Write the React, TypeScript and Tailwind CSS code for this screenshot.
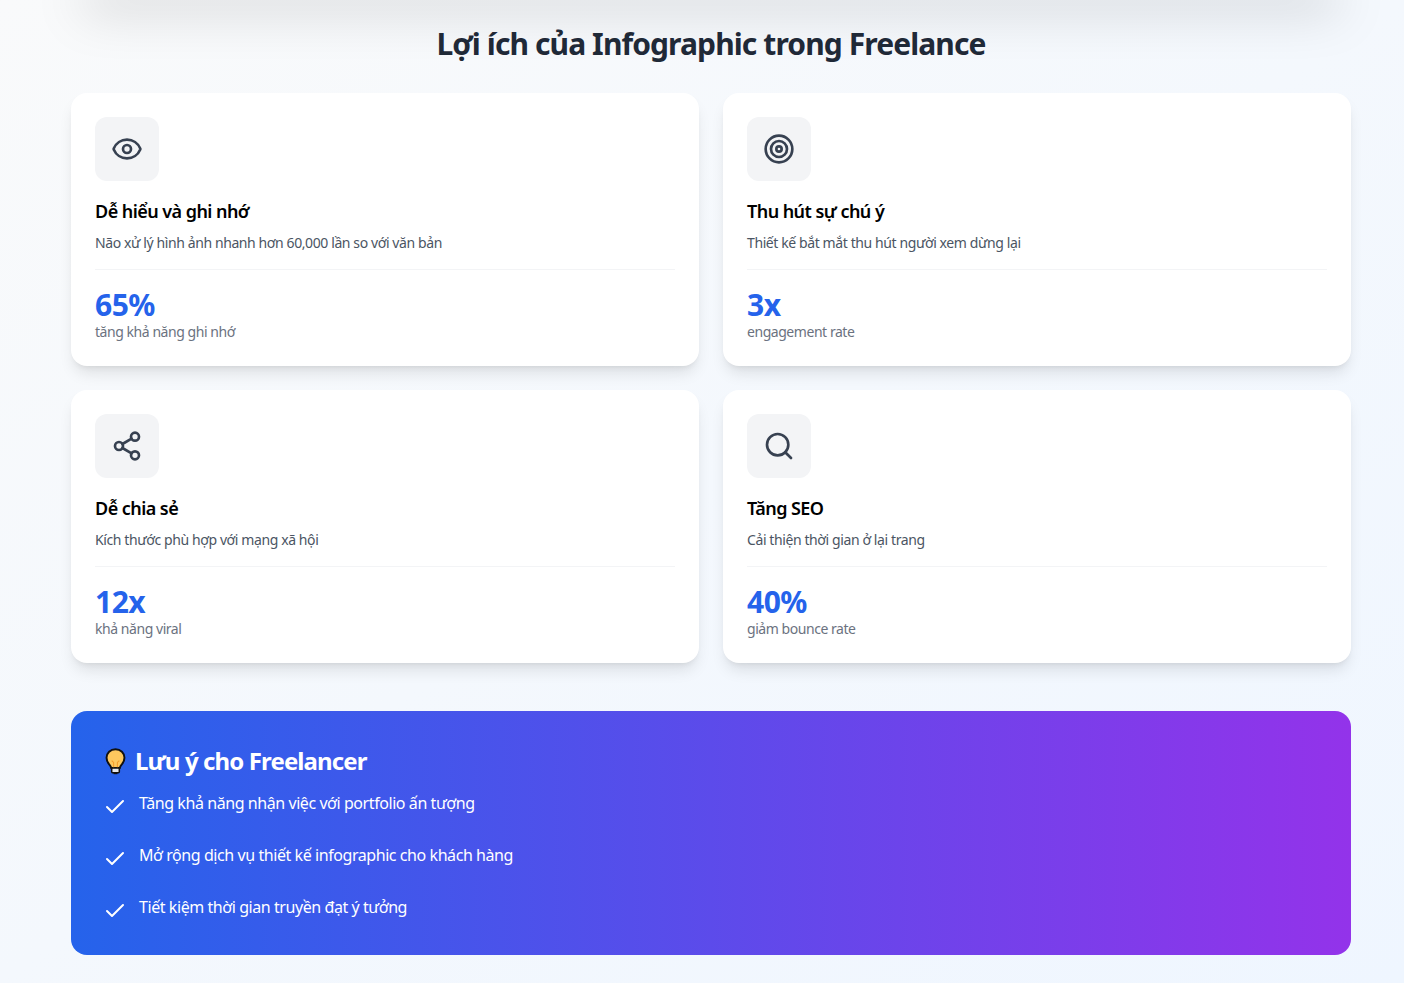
import { Check, Eye, Search, Share2, Target } from "lucide-react";

const benefits = [
  { icon: Eye, title: "Dễ hiểu và ghi nhớ", desc: "Não xử lý hình ảnh nhanh hơn 60,000 lần so với văn bản", stat: "65%", label: "tăng khả năng ghi nhớ" },
  { icon: Target, title: "Thu hút sự chú ý", desc: "Thiết kế bắt mắt thu hút người xem dừng lại", stat: "3x", label: "engagement rate" },
  { icon: Share2, title: "Dễ chia sẻ", desc: "Kích thước phù hợp với mạng xã hội", stat: "12x", label: "khả năng viral" },
  { icon: Search, title: "Tăng SEO", desc: "Cải thiện thời gian ở lại trang", stat: "40%", label: "giảm bounce rate" },
];

const notes = [
  "Tăng khả năng nhận việc với portfolio ấn tượng",
  "Mở rộng dịch vụ thiết kế infographic cho khách hàng",
  "Tiết kiệm thời gian truyền đạt ý tưởng",
];

function Bulb() {
  return (
    <svg width="21" height="27" viewBox="0 0 22 28" className="ml-[2px] shrink-0">
      <path d="M11 1.200C5.600 1.200 1.600 5.200 1.600 10.200c0 3 1.300 5 2.800 6.800 1 1.200 1.900 2.400 2.100 3.800h9c.2-1.400 1.100-2.600 2.100-3.800 1.500-1.800 2.800-3.800 2.800-6.800C20.400 5.200 16.400 1.200 11 1.200z" fill="#fdc85e" stroke="#111" strokeWidth="2" />
      <path d="M9 20.500v-5.500l-2-2M13 20.500v-5.500l2-2" fill="none" stroke="#f59e2b" strokeWidth="1.200" />
      <rect x="7" y="20.800" width="8" height="5" rx="1" fill="#e5e7eb" stroke="#111" strokeWidth="1.600" />
      <rect x="9" y="25.500" width="4" height="1.800" fill="#111" />
    </svg>
  );
}

export default function App() {
  return (
    <div className="min-h-[983px] overflow-hidden bg-gradient-to-br from-[#f9fafb] to-[#eff6ff] font-['Noto_Sans','Open_Sans',sans-serif]">
      <div className="ml-[71px] w-[1280px]">
        <div className="-mt-[46px] h-10 rounded-2xl bg-white shadow-2xl" />

        <h2 className="mt-[32px] text-center text-3xl font-bold leading-9 tracking-[-0.9px] text-[#1f2937]">Lợi ích của Infographic trong Freelance</h2>

        <div className="mt-[31px] grid grid-cols-2 gap-6">
          {benefits.map((b) => (
            <div key={b.title} className="h-[273px] rounded-2xl bg-white p-6 shadow-lg">
              <div className="flex h-16 w-16 items-center justify-center rounded-xl bg-[#f3f4f6]">
                <b.icon className="h-8 w-8 text-[#374151]" />
              </div>
              <h3 className="mt-4 text-lg font-semibold leading-7 tracking-[-0.55px] text-black">{b.title}</h3>
              <p className="mt-[8px] text-sm leading-5 tracking-[-0.4px] text-[#4b5563]">{b.desc}</p>
              <div className="mt-4 border-t border-[#f3f4f6] pt-[18px]">
                <div className="text-3xl font-bold leading-[34px] tracking-[-0.5px] text-[#2563eb]">{b.stat}</div>
                <div className="text-sm leading-5 tracking-[-0.45px] text-[#6b7280]">{b.label}</div>
              </div>
            </div>
          ))}
        </div>

        <div className="mt-12 h-[244px] rounded-2xl bg-[linear-gradient(to_right,#2563eb,#9333ea)] p-8 text-white">
          <h3 className="mt-[2px] flex items-center gap-[9px] text-2xl font-bold leading-8 tracking-[-0.88px]">
            <Bulb />
            Lưu ý cho Freelancer
          </h3>
          <ul className="mt-[14px] flex flex-col gap-6">
            {notes.map((n) => (
              <li key={n} className="flex items-start gap-3 text-base leading-6 tracking-[-0.43px]">
                <Check className="mt-1 h-6 w-6 shrink-0" strokeWidth={2} />
                <span>{n}</span>
              </li>
            ))}
          </ul>
        </div>
      </div>
    </div>
  );
}
